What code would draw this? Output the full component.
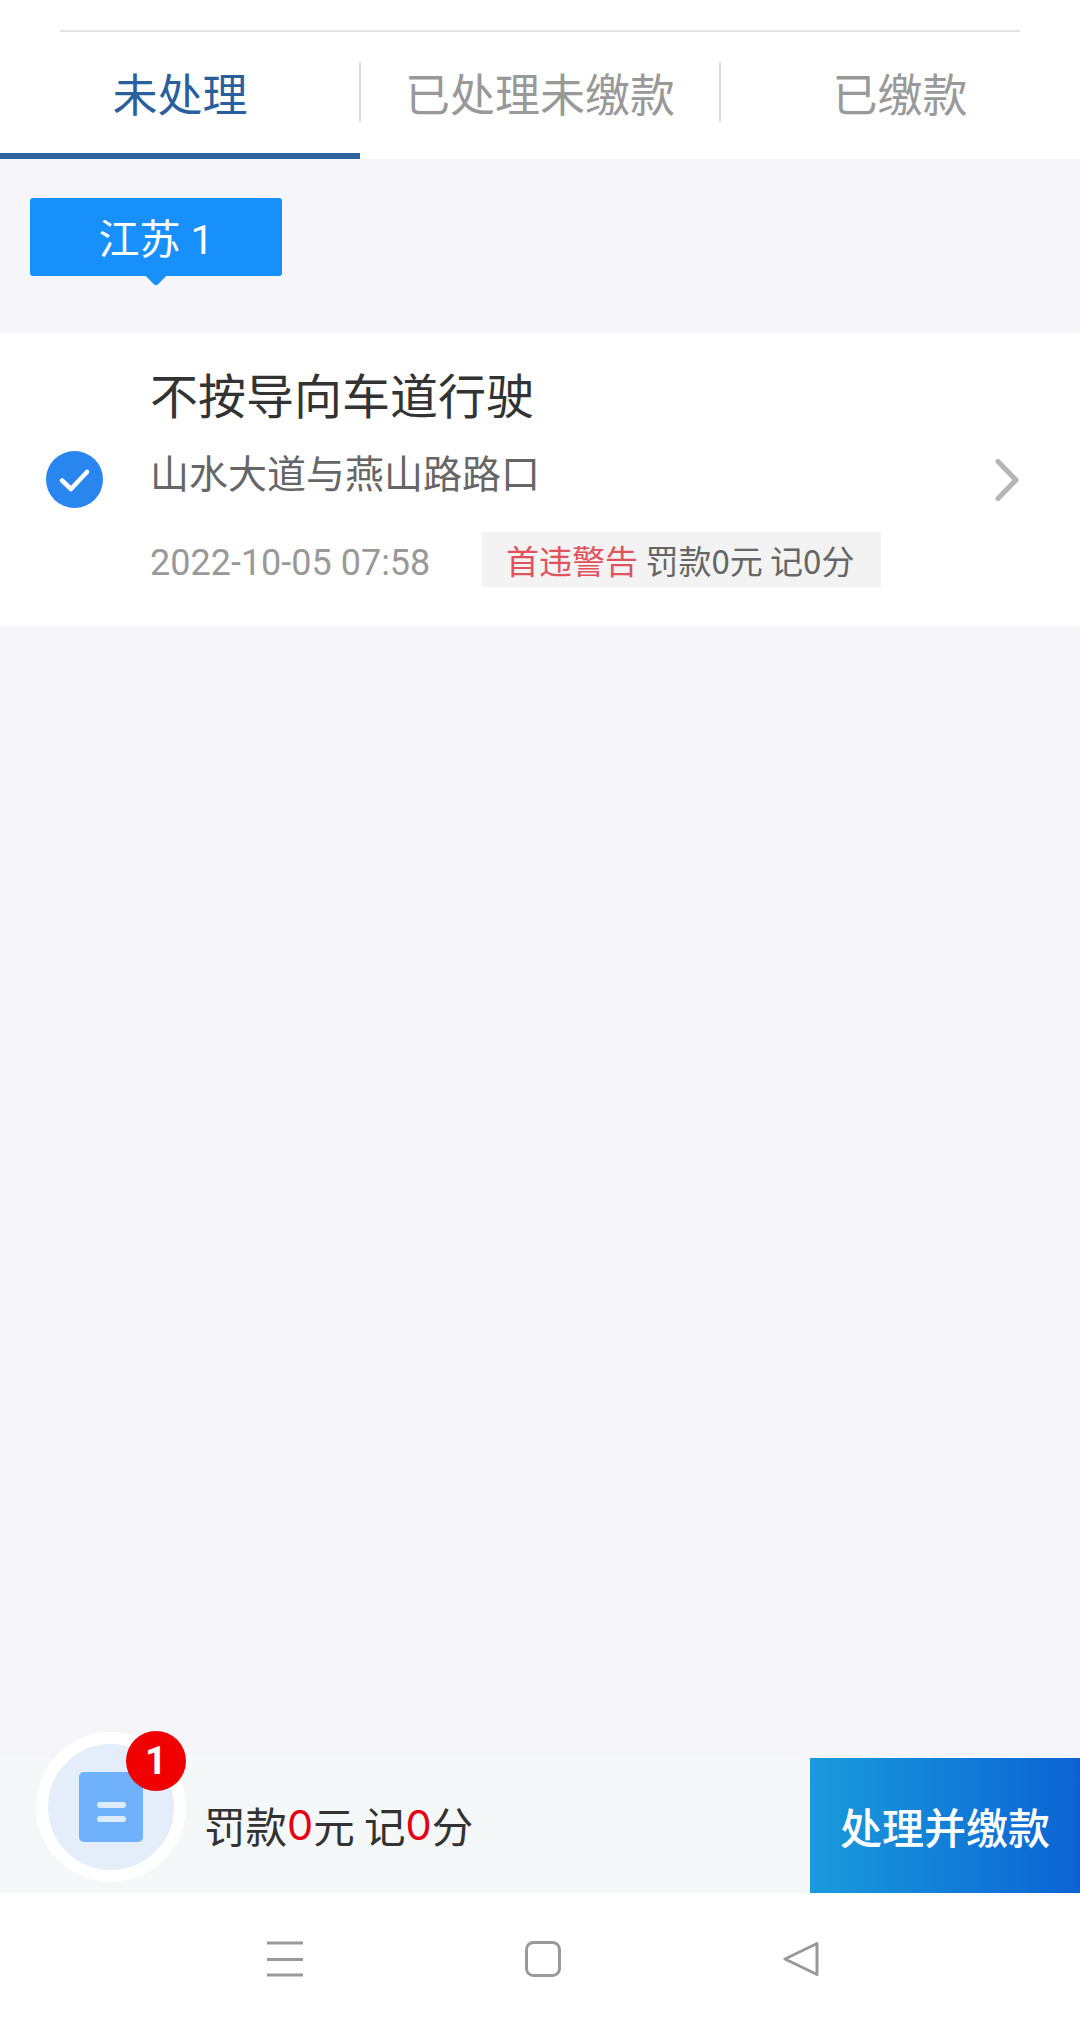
<div class="page">
  <header class="head">
    <div class="topline"></div>
    <nav class="tabs">
      <div class="tab active">未处理</div>
      <div class="tab">已处理未缴款</div>
      <div class="tab">已缴款</div>
    </nav>
  </header>

  <main class="main">
    <div class="tagrow"><div class="tag">江苏 1</div></div>
    <section class="card">
      <svg class="check" viewBox="0 0 57 57" width="57" height="57" aria-hidden="true">
        <circle cx="28.5" cy="28.5" r="28.5" fill="#2a86ef" />
        <path d="M16 29.5l9 8.5L41 21" fill="none" stroke="#fff" stroke-width="4.5" stroke-linecap="round" stroke-linejoin="round" />
      </svg>
      <div class="info">
        <div class="title">不按导向车道行驶</div>
        <div class="addr">山水大道与燕山路路口</div>
        <div class="meta">
          <span class="date">2022-10-05 07:58</span>
          <span class="pill"><em>首违警告</em> 罚款0元 记0分</span>
        </div>
      </div>
      <svg class="chev" viewBox="0 0 24 42" width="24" height="42" aria-hidden="true">
        <path d="M3 2.5L21 21L3 39.5" fill="none" stroke="#b4b4b4" stroke-width="5" stroke-linecap="round" stroke-linejoin="round" />
      </svg>
    </section>
  </main>

  <section class="bar">
    <div class="ball">
      <div class="doc"><i></i><i></i></div>
      <span class="badge">1</span>
    </div>
    <div class="sum">罚款<b>0</b>元 记<b>0</b>分</div>
    <button class="pay">处理并缴款</button>
  </section>

  <footer class="sysnav">
    <svg viewBox="0 0 36 36" width="36" height="36" aria-hidden="true">
      <path d="M0 2h36M0 18.500h36M0 34h36" stroke="#999" stroke-width="3" fill="none" />
    </svg>
    <svg viewBox="0 0 36 36" width="36" height="36" aria-hidden="true">
      <rect x="1.500" y="1.500" width="33" height="33" rx="7" fill="none" stroke="#999" stroke-width="3" />
    </svg>
    <svg viewBox="0 0 36 36" width="36" height="36" aria-hidden="true">
      <path d="M34 2.500L2 18L34 33.500Z" fill="none" stroke="#999" stroke-width="3" stroke-linejoin="round" />
    </svg>
  </footer>
</div>

<style>
  :global(body) {
    margin: 0;
    background: #fff;
  }
  .page {
    width: 1080px;
    height: 2025px;
    display: flex;
    flex-direction: column;
    font-family: "Noto Sans CJK SC", Roboto, sans-serif;
    color: #333;
    overflow: hidden;
  }
  .head {
    padding-top: 30px;
    background: #fff;
  }
  .topline {
    height: 2px;
    margin: 0 60px;
    background: #e2e2e2;
  }
  .tabs {
    display: flex;
    height: 127px;
  }
  .tab {
    position: relative;
    flex: 1;
    display: flex;
    align-items: center;
    justify-content: center;
    padding-bottom: 6px;
    box-sizing: border-box;
    font-size: 45px;
    color: #999;
  }
  .tab + .tab::before {
    content: "";
    position: absolute;
    left: -1px;
    top: 30px;
    height: 60px;
    width: 2px;
    background: #ddd;
  }
  .tab.active {
    color: #2a5f9e;
    border-bottom: 6px solid #2f659f;
    padding-bottom: 0;
  }
  .main {
    flex: 1;
    background: #f5f5fa;
  }
  .tagrow {
    height: 174px;
    padding: 39px 0 0 30px;
    box-sizing: border-box;
  }
  .tag {
    position: relative;
    width: 252px;
    height: 78px;
    border-radius: 3px;
    background: #1890fb;
    color: #fff;
    font-family: Roboto, "Noto Sans CJK SC", sans-serif;
    font-size: 41px;
    display: flex;
    align-items: center;
    justify-content: center;
    padding-bottom: 2px;
    box-sizing: border-box;
  }
  .tag::after {
    content: "";
    position: absolute;
    left: 118px;
    bottom: -7px;
    width: 16px;
    height: 16px;
    background: #1890fb;
    transform: rotate(45deg);
    border-radius: 3px;
  }
  .card {
    height: 293px;
    background: #fff;
    display: flex;
    align-items: center;
    padding: 0 61px 0 46px;
    box-sizing: border-box;
  }
  .check {
    flex: none;
  }
  .info {
    flex: 1;
    align-self: flex-start;
    margin-left: 47px;
    padding-top: 28px;
    display: flex;
    flex-direction: column;
  }
  .title {
    font-size: 48px;
    line-height: 64px;
    color: #333;
  }
  .addr {
    font-size: 39px;
    line-height: 52px;
    margin-top: 20px;
    color: #666;
  }
  .meta {
    display: flex;
    align-items: center;
    margin-top: 35px;
  }
  .date {
    font-family: Roboto, sans-serif;
    font-size: 36px;
    color: #999;
    width: 332px;
    padding-top: 6px;
  }
  .pill {
    height: 55px;
    width: 399px;
    box-sizing: border-box;
    padding-left: 24px;
    background: #f3f3f3;
    display: flex;
    align-items: center;
    white-space: pre;
    font-size: 33px;
    color: #666;
  }
  .pill em {
    font-style: normal;
    color: #e0525c;
  }
  .chev {
    flex: none;
  }
  .bar {
    position: relative;
    height: 136px;
    background: #f5f8f8;
    display: flex;
    align-items: stretch;
  }
  .ball {
    position: absolute;
    left: 36px;
    top: -25px;
    width: 150px;
    height: 150px;
    box-sizing: border-box;
    border: 12px solid #fff;
    border-radius: 50%;
    background: #e4eefb;
    display: flex;
    align-items: center;
    justify-content: center;
  }
  .doc {
    width: 64px;
    height: 70px;
    border-radius: 5px;
    background: #6fb1fb;
    display: flex;
    flex-direction: column;
    align-items: center;
    justify-content: center;
    gap: 8px;
    padding-top: 9px;
    box-sizing: border-box;
  }
  .doc i {
    display: block;
    width: 29px;
    height: 6px;
    border-radius: 3px;
    background: #dcebfd;
  }
  .badge {
    position: absolute;
    right: -12px;
    top: -13px;
    width: 60px;
    height: 60px;
    border-radius: 50%;
    background: #f00000;
    color: #fff;
    font-family: Roboto, sans-serif;
    font-weight: 700;
    font-size: 38px;
    display: flex;
    align-items: center;
    justify-content: center;
  }
  .sum {
    margin-left: 204px;
    font-size: 41.500px;
    display: flex;
    align-items: center;
    white-space: pre;
    flex: 1;
    color: #333;
  }
  .sum b {
    font-family: Inter, sans-serif;
    font-weight: 400;
    color: #e60012;
  }
  .pay {
    flex: none;
    width: 270px;
    border: 0;
    padding: 0;
    margin: 1px 0 0;
    background: linear-gradient(90deg, #1a9bdc, #0b63d3);
    color: #fff;
    font: 500 42px "Noto Sans CJK SC", sans-serif;
  }
  .sysnav {
    height: 132px;
    display: flex;
    align-items: center;
    padding: 0 0 0 267px;
    gap: 222px;
    box-sizing: border-box;
    background: #fff;
  }
  .sysnav svg {
    flex: none;
  }
</style>
